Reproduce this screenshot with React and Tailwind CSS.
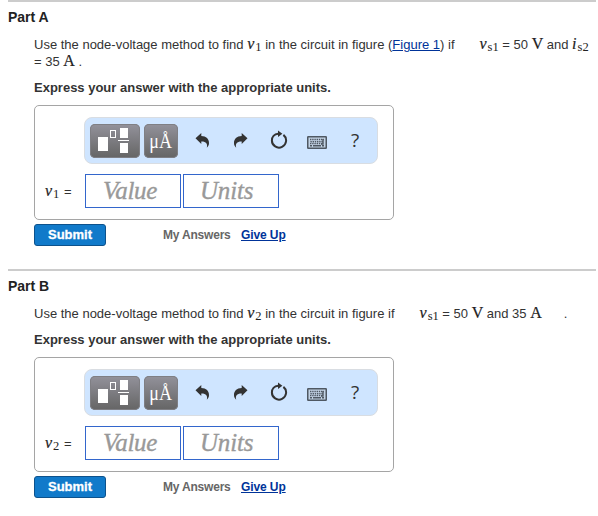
import { clsx } from 'clsx'

const serif = "font-['Liberation_Serif',serif]"

function Variable({ name, sub, className }) {
  return (
    <span className={clsx(serif, "inline-block whitespace-nowrap text-[16px] leading-none italic text-[#222] [-webkit-text-stroke:0.2px_#222]", className)}>
      {name}
      <span className="relative top-[2px] ml-px text-[12.5px] not-italic [-webkit-text-stroke:0]">{sub}</span>
    </span>
  )
}

function Unit({ children, className }) {
  return (
    <span className={clsx(serif, "inline-block text-[16px] leading-none text-[#222] [-webkit-text-stroke:0.2px_#222]", className)}>{children}</span>
  )
}

function TemplateIcon() {
  return (
    <svg width="50" height="34" viewBox="0 0 50 34" fill="#fff">
      <rect x="8" y="13" width="10" height="14" />
      <rect x="20.5" y="6.5" width="5" height="7" fill="none" stroke="#fff" />
      <rect x="30" y="4" width="8" height="10" />
      <rect x="28" y="16" width="11" height="1" />
      <rect x="30" y="19" width="8" height="10" />
    </svg>
  )
}

function UndoIcon({ className }) {
  return (
    <svg className={className} width="15" height="17" viewBox="0 0 15 17" fill="#333">
      <path d="M0.5 6.2 6.3 1v3.1c4.8.1 8 3 7.7 7.4-.1 1.6-.9 3.1-2.2 4.3 1-3.8-.6-6.3-5.5-6.2v2.3z" />
    </svg>
  )
}

function ResetIcon() {
  return (
    <svg width="18" height="19" viewBox="0 0 18 19">
      <path d="M8.2 3.7C4.2 4 1.9 7 1.9 10.4A7.1 7.1 0 1 0 13.4 4.9" fill="none" stroke="#333" strokeWidth="2" />
      <path d="M8 0.5 12.4 3.7 8 7z" fill="#333" />
    </svg>
  )
}

function KeyboardIcon() {
  return (
    <svg width="20" height="13" viewBox="0 0 20 13">
      <rect x="0.75" y="0.75" width="18.5" height="11.5" rx="0.5" fill="#c3d3e5" stroke="#4f5863" strokeWidth="1.5" />
      <path d="M3 3.5h14" stroke="#4f5863" strokeWidth="1.4" strokeDasharray="1.4 0.8" />
      <path d="M3.4 5.7h13" stroke="#4f5863" strokeWidth="1.4" strokeDasharray="1.4 0.8" />
      <path d="M3 7.7h12" stroke="#4f5863" strokeWidth="1.2" strokeDasharray="1.4 0.8" />
      <path d="M3 9.8h2M6 9.8h8M15 9.8h2M16 3v5h-2" fill="none" stroke="#4f5863" strokeWidth="1.4" />
    </svg>
  )
}

function ToolButton({ children, className }) {
  return (
    <button
      className={clsx(
        "flex h-[34px] shrink-0 items-center justify-center rounded-[5px] bg-linear-to-b from-[#93929b] to-[#656565] text-white shadow-[inset_0_0_0_1px_#7f7f84]",
        className
      )}
    >
      {children}
    </button>
  )
}

function Toolbar() {
  return (
    <div className="ml-[49px] flex h-[47px] w-[294px] items-center rounded-[8px] border border-[#d9dde2] bg-[#cfe5ff] pl-[5px]">
      <ToolButton className="w-[50px]">
        <TemplateIcon />
      </ToolButton>
      <ToolButton className={clsx(serif, "ml-1 w-[34px] text-[20px]")}>
        <span className="mt-[2px] inline-block scale-x-90">μÅ</span>
      </ToolButton>
      <UndoIcon className="ml-[17px]" />
      <UndoIcon className="ml-[23px] -scale-x-100" />
      <span className="ml-[22px] mb-0.5">
        <ResetIcon />
      </span>
      <span className="ml-[19px] mt-[3px]">
        <KeyboardIcon />
      </span>
      <span className="ml-[24px] -mt-px font-['Open_Sans',sans-serif] text-[19px] leading-none text-[#333]">?</span>
    </div>
  )
}

function Field({ label, className }) {
  return (
    <div
      className={clsx(
        serif,
        "flex h-[34px] w-24 items-center border border-[#3366cc] pb-px text-[25px] leading-none text-[#999] italic [-webkit-text-stroke:0.35px_#999]",
        className
      )}
    >
      {label}
    </div>
  )
}

function AnswerForm({ sub }) {
  return (
    <>
      <div className="mt-[9px] h-[115px] w-[360px] rounded-[5px] border border-[#a5a5a5] pt-[11px]">
        <Toolbar />
        <div className="mt-[10px] flex items-center pl-[10px]">
          <span className="w-10 whitespace-nowrap">
            <Variable name="v" sub={sub} className="mr-px" /> =
          </span>
          <Field label="Value" className="pl-[17px] tracking-[-0.3px]" />
          <Field label="Units" className="ml-0.5 pl-[16px] tracking-[-0.2px]" />
        </div>
      </div>
      <div className="mt-1 flex h-[22px] items-center font-bold">
        <button className="h-[22px] w-[72px] rounded-[3px] border border-[#0d528c] bg-[#117aca] pb-0.5 text-[13px] leading-none text-white [-webkit-text-stroke:0.3px_#fff]">
          Submit
        </button>
        <span className="ml-[57px] w-[78px] whitespace-nowrap text-[12px] tracking-[-0.2px] text-[#666]">My Answers</span>
        <a href="#" className="whitespace-nowrap text-[12px] tracking-[-0.1px] text-[#003399] underline">Give Up</a>
      </div>
    </>
  )
}

function Part({ title, sub, children }) {
  return (
    <section className="ml-2 w-[588px] border-t-2 border-[#ccc]">
      <h2 className="mt-[6px] text-[14px] leading-[18px] font-bold text-[#222]">{title}</h2>
      <div className="mt-[10px] pl-[26px]">
        <div className="whitespace-nowrap">{children}</div>
        <p className="mt-[9px] font-bold">Express your answer with the appropriate units.</p>
        <AnswerForm sub={sub} />
      </div>
    </section>
  )
}

export default function App() {
  return (
    <main className="h-[516px] w-[598px] overflow-hidden bg-white font-['Liberation_Sans',Arial,sans-serif] text-[13px] leading-[17px] text-[#333]">
      <Part title="Part A" sub="1">
        <p className="h-[17px]">
          Use the node-voltage method to find <Variable name="v" sub="1" /> in the circuit in figure (
          <a href="#" className="text-[#003399] underline">Figure 1</a>) if
          <Variable name="v" sub="s1" className="ml-[25px]" /> = 50 <Unit>V</Unit> and <Variable name="i" sub="s2" />
        </p>
        <p className="h-[17px]">
          = 35 <Unit>A</Unit> .
        </p>
      </Part>
      <div className="h-[23px]" />
      <Part title="Part B" sub="2">
        <p className="h-[17px]">
          Use the node-voltage method to find <Variable name="v" sub="2" /> in the circuit in figure if
          <Variable name="v" sub="s1" className="ml-[25px]" /> = 50 <Unit>V</Unit> and 35 <Unit>A</Unit>
          <span className="ml-[22px]">.</span>
        </p>
      </Part>
    </main>
  )
}
